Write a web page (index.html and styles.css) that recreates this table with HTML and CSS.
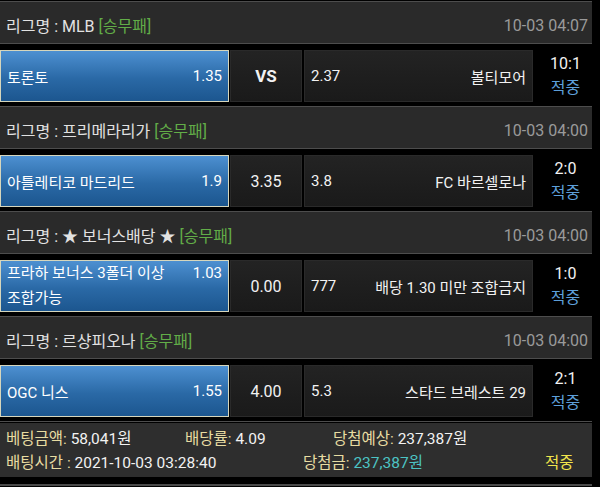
FILE: index.html
```html
<!DOCTYPE html>
<html lang="ko">
<head>
  <meta charset="UTF-8">
  <meta name="viewport" content="width=device-width, initial-scale=1.0">
  <title>배팅내역</title>
  <link rel="stylesheet" href="styles.css">
</head>
<body>
  <div class="board">

    <section class="game">
      <div class="league">
        <span>리그명 : MLB <em>[승무패]</em></span>
        <span class="date">10-03 04:07</span>
      </div>
      <div class="match">
        <div class="pick home on"><span>토론토</span><span>1.35</span></div>
        <div class="pick draw"><b>VS</b></div>
        <div class="pick away"><span>2.37</span><span>볼티모어</span></div>
        <div class="result"><span>10:1</span><span class="hit">적중</span></div>
      </div>
    </section>

    <section class="game">
      <div class="league">
        <span>리그명 : 프리메라리가 <em>[승무패]</em></span>
        <span class="date">10-03 04:00</span>
      </div>
      <div class="match">
        <div class="pick home on"><span>아틀레티코 마드리드</span><span>1.9</span></div>
        <div class="pick draw"><span>3.35</span></div>
        <div class="pick away"><span>3.8</span><span>FC 바르셀로나</span></div>
        <div class="result"><span>2:0</span><span class="hit">적중</span></div>
      </div>
    </section>

    <section class="game">
      <div class="league">
        <span>리그명 : ★ 보너스배당 ★ <em>[승무패]</em></span>
        <span class="date">10-03 04:00</span>
      </div>
      <div class="match">
        <div class="pick home on wrap"><span class="team">프라하 보너스 3폴더 이상<br>조합가능</span><span class="odds">1.03</span></div>
        <div class="pick draw"><span>0.00</span></div>
        <div class="pick away"><span>777</span><span>배당 1.30 미만 조합금지</span></div>
        <div class="result"><span>1:0</span><span class="hit">적중</span></div>
      </div>
    </section>

    <section class="game">
      <div class="league">
        <span>리그명 : 르샹피오나 <em>[승무패]</em></span>
        <span class="date">10-03 04:00</span>
      </div>
      <div class="match">
        <div class="pick home on"><span>OGC 니스</span><span>1.55</span></div>
        <div class="pick draw"><span>4.00</span></div>
        <div class="pick away"><span>5.3</span><span>스타드 브레스트 29</span></div>
        <div class="result"><span>2:1</span><span class="hit">적중</span></div>
      </div>
    </section>

    <div class="summary">
      <div class="line first">
        <span><i>베팅금액:</i> 58,041원</span>
        <span><i>배당률:</i> 4.09</span>
        <span><i>당첨예상:</i> 237,387원</span>
      </div>
      <div class="line second">
        <span><i>배팅시간 :</i> 2021-10-03 03:28:40</span>
        <span><i>당첨금:</i> <b class="win">237,387원</b></span>
        <span class="done">적중</span>
      </div>
    </div>

  </div>
</body>
</html>
```

FILE: styles.css
```css
body {
  margin: 0;
  background-color: #000;
  font-family: Roboto, "Noto Sans CJK KR", sans-serif;
  color: #eee;
}
.board {
  width: 592px;
  padding-top: 1px;
  padding-bottom: 7px;
  border-bottom: 2px solid #4a4a4a;
}
.game {
  padding-bottom: 4px;
  border-bottom: 1px solid #4d4d4d;
}
.game:first-child {
  border-top: 1px solid #4d4d4d;
}
.league {
  display: flex;
  justify-content: space-between;
  align-items: center;
  box-sizing: border-box;
  height: 42px;
  padding: 5px 4px 0 6px;
  background-color: #2a2a2a;
  border-bottom: 1px solid #4d4d4d;
  font-size: 16px;
  color: #e2e2e2;
}
.league em {
  font-style: normal;
  color: #62ad48;
}
.league .date {
  color: #9a9a9a;
}
.match {
  display: flex;
  margin-top: 6px;
  height: 52px;
}
.pick {
  display: flex;
  align-items: center;
  justify-content: space-between;
  box-sizing: border-box;
  height: 52px;
  padding: 0 6px;
  font-size: 15px;
  color: #f2f2f2;
  background: linear-gradient(#232323, #1a1a1a);
  border: 1px solid #2a2a2a;
}
.home {
  width: 229px;
}
.draw {
  width: 72px;
  margin-left: 1px;
  justify-content: center;
  font-size: 16px;
}
.draw b {
  font-size: 17px;
}
.away {
  width: 229px;
  margin-left: 2px;
}
.pick.on {
  background: linear-gradient(#4d90d1, #2a69a6 55%, #1c568f);
  border-color: #d6d6bc;
  color: #fff;
}
.wrap .team {
  line-height: 25px;
}
.wrap .odds {
  align-self: flex-start;
  line-height: 25px;
}
.result {
  flex: 1;
  display: flex;
  flex-direction: column;
  align-items: center;
  justify-content: center;
  padding-left: 6px;
  font-size: 16px;
  line-height: 24px;
  color: #f2f2f2;
}
.result .hit {
  color: #5d9fda;
}
.summary {
  margin-top: 1px;
  padding: 2px 6px 4px;
  background-color: #2e2e2e;
  font-size: 15.5px;
  color: #f2f2f2;
}
.summary i {
  font-style: normal;
  color: #e8dca2;
}
.line {
  display: grid;
  height: 24px;
  align-items: center;
}
.first {
  grid-template-columns: 179px 148px 1fr;
}
.second {
  grid-template-columns: 297px 242px 1fr;
}
.summary .win {
  font-weight: normal;
  color: #4cc4c4;
}
.summary .done {
  color: #f1e54c;
}
```
